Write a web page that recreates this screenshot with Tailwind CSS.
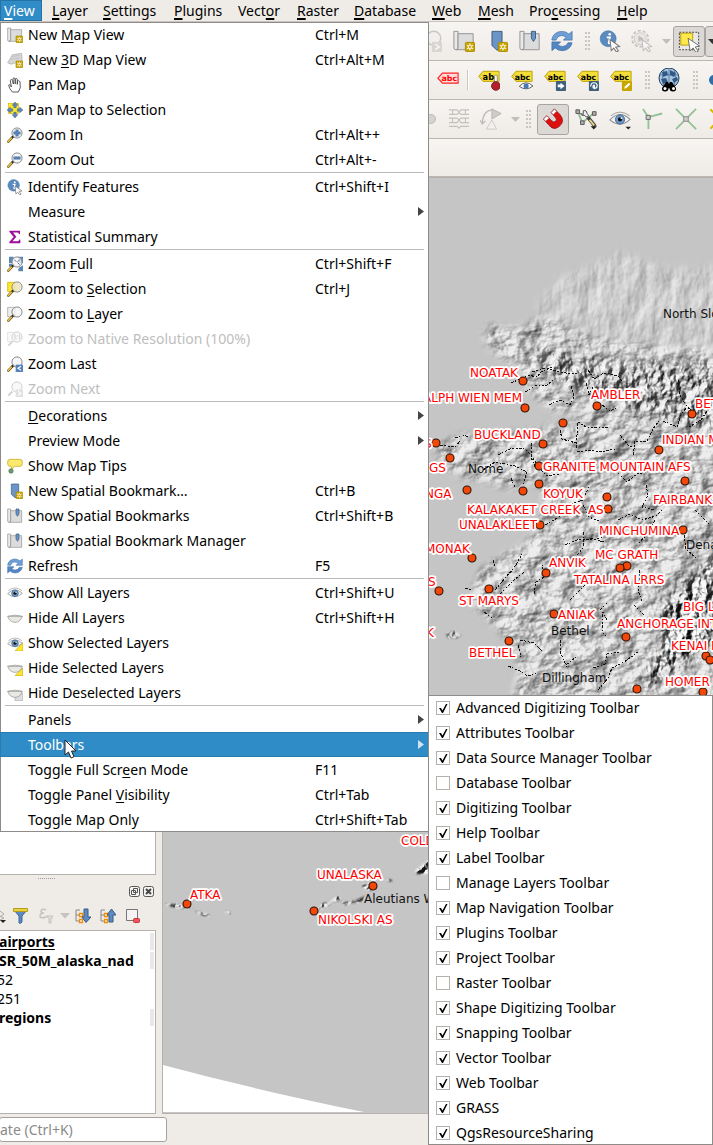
<!DOCTYPE html>
<html lang="en">
<head>
<meta charset="utf-8">
<title>QGIS View menu</title>
<script src="https://cdn.jsdelivr.net/npm/@tailwindcss/browser@4"></script>
</head>
<body class="relative flex min-h-screen flex-col overflow-hidden bg-[#efebe7] font-['Noto_Sans','Liberation_Sans',sans-serif] text-sm text-black">

<svg class="hidden" aria-hidden="true">
  <defs>
    <g id="badge"><rect x="13.5" y="13.500" width="10" height="10" rx="1" fill="#c9a500" stroke="#a98a00"/><path d="M18.500 14.800v7.400M15.300 16.600l6.400 3.800M15.300 20.400l6.400-3.800" stroke="#fff" stroke-width="1.400"/><circle cx="18.500" cy="18.500" r="1.200" fill="#c9a500"/></g>
    <g id="sheet"><path d="M1 1.500h4.500v18q0 2-2.300 2T1 19.500z" fill="#e9e9e9" stroke="#8f8f8f"/><path d="M5.500 4H22v17.500H3.200q2.300 0 2.300-2z" fill="#dcdcdc" stroke="#8f8f8f"/></g>
    <g id="lens"><path d="M8 15.500 2 22" stroke="#5b4a12" stroke-width="3.600" stroke-linecap="round"/><path d="M6.500 17 2 21.800" stroke="#f0c648" stroke-width="2.200" stroke-linecap="round"/><path d="M10.500 13 8 15.500" stroke="#222" stroke-width="3"/><circle cx="15" cy="9" r="7.600" fill="#f4f4f4" fill-opacity=".75" stroke="#8b8b8b" stroke-width="1.500"/></g>
    <path id="ptr" d="M12 10.500 22.500 18l-4.300.7 3 4-2.200 1.300-2.800-4.200-2.800 2.800z" fill="#fff" stroke="#777" stroke-width="1.100"/>
    <g id="eyeb"><path d="M1 13Q12 1.500 23 12.500 12 22.500 1 13z" fill="#f4f4f4" stroke="#8d8d8d" stroke-width="1.100"/><path d="M2 8.500Q12 .5 22.500 8.500" fill="none" stroke="#999"/><circle cx="12" cy="12.500" r="5" fill="#6f9acb" stroke="#43658c"/><circle cx="12" cy="12.500" r="2.300" fill="#111"/><circle cx="13.500" cy="11" r="1" fill="#fff"/></g>
    <path id="lid" d="M1 9.500h22Q20 18.500 12 18.500T1 9.500zM1 9.500q11-3.500 22 0" fill="#e9e9e4" stroke="#9c9c9c" stroke-width="1.200"/>
    <g id="tag"><path d="M.7 8 5.500 2.500H23v11H5.500z" fill="#f4de35" stroke="#b79d00"/><circle cx="4" cy="8" r="1" fill="#fff" stroke="#b79d00" stroke-width=".5"/></g>
  </defs>
  <symbol id="mapnew" viewBox="0 0 24 24"><use href="#sheet"/><use href="#badge"/></symbol>
  <symbol id="map3d" viewBox="0 0 24 24"><path d="M1 16 8 4l14-2 1 14q-7-4-12 1-5 3-10-1z" fill="#d6d6d6" stroke="#aaa"/><path d="M7 7l12-2M5 11l14-2" stroke="#bbb"/><use href="#badge"/></symbol>
  <symbol id="pan" viewBox="0 0 24 24"><path d="M8 22.500 4 17 2.500 12q1.600-1.500 3 .5l1 2.500L5 5.500q0-1.600 1.500-1.600T8.500 5l1 5.500L9 3q0-1.600 1.500-1.600T12.300 3v7.500V4q0-1.600 1.600-1.600T15.500 4v7V7q0-1.500 1.700-1.500T19.500 7.500L20 16l-3 6.500z" fill="#fff" stroke="#444" stroke-width="1.300"/></symbol>
  <symbol id="pansel" viewBox="0 0 24 24"><rect x="2" y="2" width="15" height="15" fill="#ffe72e" stroke="#d3b600"/><path d="M12 0l4.300 5h-2.500v3.500h-3.600V5H7.700zM12 24l4.300-5h-2.500v-3.500h-3.600V19H7.700zM0 12l5-4.300v2.500h3.500v3.600H5v2.500zM24 12l-5-4.300v2.500h-3.500v3.600H19v2.500z" fill="#5f87b5" stroke="#3f5f87" stroke-width=".7"/></symbol>
  <symbol id="zin" viewBox="0 0 24 24"><use href="#lens"/><path d="M13 4h4v3h3v4h-3v3h-4v-3h-3V7h3z" fill="#5583ba" stroke="#416897" stroke-width=".5"/></symbol>
  <symbol id="zout" viewBox="0 0 24 24"><use href="#lens"/><path d="M10 7h10v4H10z" fill="#5583ba" stroke="#416897" stroke-width=".5"/></symbol>
  <symbol id="ident" viewBox="0 0 24 24"><circle cx="10" cy="9.500" r="8.700" fill="#5b8abf" stroke="#3f6fa5" stroke-width=".6"/><path d="M9 8h3l-1.500 6q0 1 1.500.2M10 8H8.500" fill="none" stroke="#fff" stroke-width="1.900"/><circle cx="11.700" cy="4.700" r="1.400" fill="#fff"/><use href="#ptr"/></symbol>
  <symbol id="sigma" viewBox="0 0 24 24"><path d="M3.500 2.500h16v5h-1.800q0-2.200-2.200-2.200H9l5 6.200-5.700 7H16q2.200 0 2.500-2.700H20v5.700H3.500v-2L10 12 3.500 4z" fill="#9b0f9b"/></symbol>
  <symbol id="zfull" viewBox="0 0 24 24"><path d="M3 1h7v3l-2 2 2 2-2 3H3zM24 1h-7v3l2 2-2 2 2 3h5zM24 23h-7v-4l2-2 5-3zM3 12h5v4H3z" fill="#5f87b5"/><use href="#lens"/><path d="M11 5.500l3 3M19 5.500l-3 3M19 13l-3-3" stroke="#47698f" stroke-width="1.500"/></symbol>
  <symbol id="zsel" viewBox="0 0 24 24"><path d="M1 2h11v14H1z" fill="#ffe72e" stroke="#c5a900"/><use href="#lens"/><circle cx="15" cy="9" r="6" fill="#e9e0a0" fill-opacity=".6"/></symbol>
  <symbol id="zlay" viewBox="0 0 24 24"><path d="M1 2h11v14H1z" fill="#eee" stroke="#999"/><use href="#lens"/></symbol>
  <symbol id="znat" viewBox="0 0 24 24"><g opacity=".3"><path d="M1 2h11v14H1z" fill="#eee" stroke="#777"/><path d="M8 15.500 2 22" stroke="#777" stroke-width="3"/><circle cx="15" cy="9" r="7.600" fill="#eee" stroke="#666" stroke-width="1.500"/><path d="M10.500 6.500 12 5.500V13M17.500 6.500 19 5.500V13M15 7v1.500M15 11v1.500" fill="none" stroke="#555" stroke-width="1.400"/></g></symbol>
  <symbol id="zlast" viewBox="0 0 24 24"><use href="#lens"/><path d="M13 13h11v11H13z" fill="#5583ba"/><path d="M21 15.500l-4.500 3 4.500 3" fill="none" stroke="#fff" stroke-width="1.700"/></symbol>
  <symbol id="znext" viewBox="0 0 24 24"><g opacity=".35"><path d="M8 15.500 2 22" stroke="#777" stroke-width="3"/><circle cx="15" cy="9" r="7.600" fill="#eee" stroke="#777" stroke-width="1.500"/><path d="M13 13h11v11H13z" fill="#aaa"/><path d="M16.500 15.500l4.500 3-4.500 3" fill="none" stroke="#fff" stroke-width="1.700"/></g></symbol>
  <symbol id="tips" viewBox="0 0 24 24"><path d="M4.500 2h15Q23 2 23 6v2.500q0 4-3.500 4H11L7 18l-.5-5.500h-2Q1 12.500 1 8.500V6q0-4 3.500-4z" fill="#fbe96f" stroke="#c9ae2b" stroke-width="1.200"/><circle cx="6" cy="19.500" r="3.300" fill="#6f9b73" stroke="#46704b"/></symbol>
  <symbol id="bmnew" viewBox="0 0 24 24"><path d="M6.500 1.500h11V21L12 22l-5.500-5z" fill="#6b95c6" stroke="#36597f"/><use href="#badge"/></symbol>
  <symbol id="bm" viewBox="0 0 24 24"><use href="#sheet"/><path d="M13.500 1.500h4.500V9l-2.250 3.500L13.500 9z" fill="#6b95c6" stroke="#36597f"/></symbol>
  <symbol id="refresh" viewBox="0 0 24 24"><path d="M1 10Q3 2 11.500 1.500q5 0 8 3L23 1.500V11h-9.500l3-3Q14.500 6 11 6 6.500 6.500 5.500 11H1z" fill="#6e9fd6" stroke="#3d6ea8" stroke-width=".8"/><path d="M23 14q-2 8-10.500 8.500-5 0-8-3L1 22.500V13h9.500l-3 3q2 2 5.500 2 4.500-.5 5.500-4z" fill="#5587c4" stroke="#3d6ea8" stroke-width=".8"/></symbol>
  <symbol id="eye" viewBox="0 0 24 24"><use href="#eyeb"/></symbol>
  <symbol id="eyemenu" viewBox="0 0 24 24"><use href="#eyeb"/><path d="M18 20.500h6l-3 3z" fill="#222"/></symbol>
  <symbol id="hide" viewBox="0 0 24 24"><use href="#lid"/></symbol>
  <symbol id="eyesel" viewBox="0 0 24 24"><path d="M12 24h12V11z" fill="#ffe72e" stroke="#c5a900"/><use href="#eyeb"/></symbol>
  <symbol id="hidesel" viewBox="0 0 24 24"><path d="M12 23.500 23.500 12v11.500z" fill="#ffe72e" stroke="#c5a900"/><use href="#lid"/></symbol>
  <symbol id="hidedes" viewBox="0 0 24 24"><path d="M12 13h12v10.500H12z" fill="#ddd" stroke="#aaa"/><use href="#lid"/></symbol>
  <symbol id="gear" viewBox="0 0 24 24"><g opacity=".4"><circle cx="10" cy="9.500" r="8.800" fill="none" stroke="#888" stroke-width="2" stroke-dasharray="3.500 2"/><circle cx="10" cy="9.500" r="6.500" fill="#ddd" stroke="#888"/><path d="M8 6l6 3.500L8 13z" fill="#777"/><use href="#ptr"/></g></symbol>
  <symbol id="select" viewBox="0 0 24 24"><path d="M1.500 2.500h21v19h-21z" fill="#e9e9e9" stroke="#333" stroke-dasharray="2 1.500"/><path d="M3 3.500h13v13H3z" fill="#ffe84a" stroke="#b79d00"/><path d="M11 9 23.500 17.500l-4.800 1 3.300 4.500-2.500 1.500-3-5-3.200 3.300z" fill="#fff" stroke="#666"/></symbol>
  <symbol id="lock" viewBox="0 0 24 24"><use href="#tag"/><text x="5" y="11.500" font-size="9" font-weight="bold" font-family="DejaVu Sans">ab</text><path d="M18 14V7.500q1.500-2 3 0V14z" fill="#fff" stroke="#777" stroke-width=".8"/><circle cx="19.500" cy="18.500" r="4.700" fill="#b3202c" stroke="#7d131b"/></symbol>
  <symbol id="tageye" viewBox="0 0 24 24"><use href="#tag"/><text x="4" y="11.500" font-size="8.500" font-weight="bold" font-family="DejaVu Sans">abc</text><path d="M9 19q7-7.500 15-.5-7 6-15 .5z" fill="#fff" stroke="#555"/><circle cx="16.500" cy="18.500" r="2.800" fill="#4977b0"/></symbol>
  <symbol id="tagmove" viewBox="0 0 24 24"><use href="#tag"/><text x="4" y="11.500" font-size="8.500" font-weight="bold" font-family="DejaVu Sans">abc</text><rect x="13" y="13" width="11" height="11" rx="1" fill="#3d607c"/><path d="M15 17h3v-2l4.500 3.500L18 22v-2h-3z" fill="#fff"/></symbol>
  <symbol id="tagrot" viewBox="0 0 24 24"><use href="#tag"/><text x="4" y="11.500" font-size="8.500" font-weight="bold" font-family="DejaVu Sans">abc</text><rect x="13" y="13" width="11" height="11" rx="1" fill="#3d607c"/><path d="M15 19q0-4 3.500-4t3.500 3-2.500 3-2-2 1.500-1v4" fill="none" stroke="#fff" stroke-width="1.300"/></symbol>
  <symbol id="tagedit" viewBox="0 0 24 24"><use href="#tag"/><text x="4" y="11.500" font-size="8.500" font-weight="bold" font-family="DejaVu Sans">abc</text><rect x="13" y="13" width="11" height="11" rx="1" fill="#c9a500"/><path d="M15.500 21.500l.7-2.500 4.500-4 1.600 1.600-4.300 4.200z" fill="#fff"/></symbol>
  <symbol id="tagred" viewBox="0 0 24 24"><path d="M1 10 6 4.500h17v11H6z" fill="#fdd" stroke="#f22" stroke-width="1.300"/><text x="5" y="13.500" font-size="8.500" font-weight="bold" font-family="DejaVu Sans" fill="#f00">abc</text></symbol>
  <symbol id="globe" viewBox="0 0 24 24"><circle cx="12" cy="10" r="10" fill="#a9c4de" stroke="#22405f"/><path d="M5 4l5-1 1 4-5 2zM13 2l6 3-2 4-4-2zM4 11l5-1 2 4-5 2zM15 11l5-2 1 3-4 3z" fill="#2f5a85"/><path d="M2 7h20M12 0v20M7 1q-3 9 0 18M17 1q3 9 0 18" fill="none" stroke="#2f5a85" stroke-width=".6"/><path d="M5 20l4-6h2l1 2 1-2h2l4 6q.5 3.500-3 3.500t-3.500-3.500h-1q0 3.500-3.500 3.500T5 20z" fill="#000"/><circle cx="8" cy="20.500" r="1.500" fill="#fff"/><circle cx="16.500" cy="20.500" r="1.500" fill="#fff"/></symbol>
  <symbol id="topo" viewBox="0 0 24 24"><path d="M1 2h9l2 3 2-3h9M1 7h9l2-2 2 2h9M1 11h9l2 2 2-2h9M1 16h9l2-3 2 3h9M1 20h9l2 2 2-2h9M5 2v5M19 2v5M5 11v5M19 11v5" fill="none" stroke="#c3c0bd" stroke-width="1.200"/></symbol>
  <symbol id="rot" viewBox="0 0 24 24"><path d="M13 2Q3 3 2.500 17M0 13l2.500 4.500L6 14" fill="none" stroke="#bdbbb8" stroke-width="1.300"/><path d="M13 1l10 5-10 6z" fill="#ccc" stroke="#b5b3b0"/><path d="M7 23l6-10 5 10z" fill="#f2f0ee" stroke="#cbc8c5"/></symbol>
  <symbol id="magnet" viewBox="0 0 24 24"><path d="M1.500 12 5.500 8.500l4.500 5q3 3 5 1t-1-5L10 5l3.500-4 6 6q6 7.500-.5 13t-12-2z" fill="#dd0f0f" stroke="#8c0000" stroke-width=".8"/><path d="M1.500 12 5.500 8.500l2.300 2.600L4 14.500zM10 5l3.500-4 2.500 2.500-3.700 3.800z" fill="#fff" stroke="#a55" stroke-width=".8"/></symbol>
  <symbol id="snapcfg" viewBox="0 0 24 24"><path d="M3 4l5 12L20 6" fill="none" stroke="#8fbf91" stroke-width="2"/><path d="M1 2h4v4H1zM6 14h4v4H6zM19 4h4v4h-4z" fill="#aaa" stroke="#555"/><path d="M9 3q4-1 4 3l2 2-2 2-3-2q-3 1-4-2l3 1z" fill="#eee" stroke="#444"/><path d="M14 10l8 10" stroke="#444" stroke-width="4"/><path d="M16 13l5 6" stroke="#e7d48b" stroke-width="2"/><path d="M17 20h7l-3.500 3.500z" fill="#222"/></symbol>
  <symbol id="vert" viewBox="0 0 24 24"><path d="M1 1l6 9v13M7 10l15-4" fill="none" stroke="#93c295" stroke-width="2"/><path d="M4.500 8h4.500v4.500H4.500z" fill="#ccc" stroke="#666"/></symbol>
  <symbol id="cross" viewBox="0 0 24 24"><path d="M1 1l22 22M23 1 1 23" stroke="#93c295" stroke-width="2"/><path d="M9.500 9.500h5v5h-5z" fill="#ccc" stroke="#888"/></symbol>
  <symbol id="ptrbig" viewBox="0 0 13 20"><path d="M1 1v15l3.500-3 2.500 6 3-1.300-2.500-5.700H12z" fill="#fff" stroke="#222"/></symbol>
</svg>

<nav class="flex h-[22px] shrink-0 items-stretch border-b border-[#c9c4bf] bg-[#efebe7] text-sm leading-5" aria-label="Menu bar" id="menubar"></nav>

<header class="flex flex-col">
  <div role="toolbar" aria-label="Map navigation" class="flex h-[39px] items-center overflow-hidden border-b border-[#bbb6b1] bg-gradient-to-b from-[#f7f5f2] to-[#efebe7] pl-[414px]" id="tb1"></div>
  <div role="toolbar" aria-label="Labels" class="flex h-[39px] items-center overflow-hidden border-b border-[#bbb6b1] bg-gradient-to-b from-[#f7f5f2] to-[#efebe7] pl-[432px]" id="tb2"></div>
  <div role="toolbar" aria-label="Snapping" class="flex h-[39px] items-center overflow-hidden border-b border-[#bbb6b1] bg-gradient-to-b from-[#f7f5f2] to-[#efebe7] pl-[414px]" id="tb3"></div>
  <div class="h-[38px] border-b border-[#bbb6b1] bg-gradient-to-b from-[#f7f5f2] to-[#efebe7]"></div>
</header>

<main class="flex flex-1">
  <aside class="flex w-[156px] shrink-0 flex-col overflow-hidden">
    <div class="mt-1 h-[694px] border-r border-b border-[#b5b1ad] bg-white"></div>
    <div class="flex h-1.5 items-center justify-center pr-16"><span class="w-[17px] border-t border-dotted border-[#999]"></span></div>
    <div class="flex h-5 items-center justify-end gap-[3px] pr-[2px]">
      <button aria-label="Float panel"><svg class="size-[11px]" viewBox="0 0 11 11"><rect x=".5" y=".5" width="10" height="10" rx="2" fill="#f5f3f1" stroke="#555"/><path d="M4.500 2.500h4v4h-4zM2.500 4.500h4v4h-4z" fill="#f5f3f1" stroke="#555"/></svg></button>
      <button aria-label="Close panel"><svg class="size-[11px]" viewBox="0 0 11 11"><rect x=".5" y=".5" width="10" height="10" rx="2" fill="#f5f3f1" stroke="#555"/><path d="M3 3l5 5M8 3 3 8" stroke="#444" stroke-width="2"/></svg></button>
    </div>
    <div role="toolbar" aria-label="Layers" class="flex h-[29px] items-center">
      <button class="w-[13px]" aria-label="Map themes"><svg class="h-4 w-2" viewBox="0 0 8 16"><path d="M0 3l4 3-4 3M0 8l4 2-4 2" fill="none" stroke="#aaa"/><path d="M0 12h6l-3 3z" fill="#222"/></svg></button>
      <button class="w-[26px]" aria-label="Filter legend"><svg class="h-4 w-[15px]" viewBox="0 0 15 16"><path d="M1 2h13L9 8v6q-1 2-3 1V8z" fill="#5c8bc2" stroke="#3f6896"/><path d="M.5.500h14v3H.5z" fill="#e8d23f" stroke="#b59d1b"/></svg></button>
      <button class="w-[16px]" aria-label="Filter by expression" disabled><svg class="h-4 w-[15px]" viewBox="0 0 15 16"><path d="M7 2Q3 0 2 3q0 2 3 2-4 0-4 3t6 1" fill="none" stroke="#c5c2bf" stroke-width="1.500"/><path d="M7 8h7l-2 3v4h-2v-4z" fill="#ddd" stroke="#c5c2bf"/></svg></button>
      <button class="w-[20px]" aria-label="Expression options" disabled><svg class="mx-auto h-1.5 w-2.5" viewBox="0 0 10 6"><path d="M0 0h10L5 5.500z" fill="#c5c2bf"/></svg></button>
      <button class="w-[25px]" aria-label="Expand all"><svg class="h-4 w-4" viewBox="0 0 16 16"><path d="M1 2h4M1 7h3M1 13h3M1 2v11" stroke="#888"/><path d="M4.500 5.500h3v3h-3zM4.500 11.500h3v3h-3z" fill="#fff" stroke="#f08c00" stroke-width="1.300"/><path d="M9 1h4v8h3l-5 5.500L7 9h2z" fill="#5c8bc2" stroke="#355a83"/></svg></button>
      <button class="w-[25px]" aria-label="Collapse all"><svg class="h-4 w-4" viewBox="0 0 16 16"><path d="M1 2h4M1 7h3M1 13h3M1 2v11" stroke="#888"/><path d="M4.500 5.500h3v3h-3zM4.500 11.500h3v3h-3z" fill="#fff" stroke="#f08c00" stroke-width="1.300"/><path d="M9 14V7H7l4.500-6L16 7h-3v7z" fill="#5c8bc2" stroke="#355a83"/></svg></button>
      <button aria-label="Remove layer"><svg class="h-4 w-4" viewBox="0 0 16 16"><path d="M1.500 1.500h11v11h-11z" fill="#f5f3f1" stroke="#777"/><rect x="8.500" y="10.500" width="6" height="4" rx="1" fill="#ee5560" stroke="#c33"/></svg></button>
    </div>
    <div class="flex flex-1 flex-col border border-l-0 border-[#b5b1ad] bg-white pt-px pr-px text-sm leading-[19px]" role="tree" aria-label="Layers">
      <div role="treeitem" class="flex h-[19px] items-center justify-between"><b class="-ml-px underline underline-offset-2">airports</b><span class="h-[17px] w-1 bg-[#e8e8e8]"></span></div>
      <div role="treeitem" class="flex h-[19px] items-center justify-between"><b class="-ml-px">SR_50M_alaska_nad</b><span class="h-[17px] w-1 bg-[#e8e8e8]"></span></div>
      <div role="treeitem" class="flex h-[19px] items-center"><span class="-ml-[3px]">52</span></div>
      <div role="treeitem" class="flex h-[19px] items-center"><span class="-ml-[3px]">251</span></div>
      <div role="treeitem" class="flex h-[19px] items-center justify-between"><b class="-ml-px">regions</b><span class="h-[17px] w-1 bg-[#e8e8e8]"></span></div>
    </div>
  </aside>
  <section class="ml-1.5 flex flex-1 border border-r-0 border-[#b5b1ad] bg-[#c5c5c5]" aria-label="Map canvas">
    <svg class="h-[934px] w-full" id="map">
      <defs>
        <filter id="soft" x="-5%" y="-5%" width="110%" height="110%" color-interpolation-filters="sRGB">
          <feTurbulence type="fractalNoise" baseFrequency=".06 .03" numOctaves="4" seed="4"/>
          <feDiffuseLighting surfaceScale="2" diffuseConstant="1.160" lighting-color="#fff" result="l"><feDistantLight azimuth="225" elevation="45"/></feDiffuseLighting>
          <feGaussianBlur in="SourceAlpha" stdDeviation="5"/><feComposite in="l" operator="in"/>
        </filter>
        <filter id="mid" x="-5%" y="-5%" width="110%" height="110%" color-interpolation-filters="sRGB">
          <feTurbulence type="fractalNoise" baseFrequency=".045 .06" numOctaves="5" seed="8"/>
          <feDiffuseLighting surfaceScale="5" diffuseConstant="1.140" lighting-color="#fff" result="l"><feDistantLight azimuth="215" elevation="45"/></feDiffuseLighting>
          <feGaussianBlur in="SourceAlpha" stdDeviation="4"/><feComposite in="l" operator="in"/>
        </filter>
        <filter id="hard" x="-10%" y="-10%" width="120%" height="120%" color-interpolation-filters="sRGB">
          <feTurbulence type="fractalNoise" baseFrequency=".09 .07" numOctaves="5" seed="3"/>
          <feDiffuseLighting surfaceScale="9" diffuseConstant="1.080" lighting-color="#fff" result="l"><feDistantLight azimuth="215" elevation="45"/></feDiffuseLighting>
          <feGaussianBlur in="SourceAlpha" stdDeviation="7"/><feComposite in="l" operator="in"/>
        </filter>
        <filter id="isle" x="-10%" y="-10%" width="120%" height="120%" color-interpolation-filters="sRGB">
          <feTurbulence type="fractalNoise" baseFrequency=".15" numOctaves="4" seed="6"/>
          <feDiffuseLighting surfaceScale="9" diffuseConstant="1.080" lighting-color="#fff" result="l"><feDistantLight azimuth="215" elevation="45"/></feDiffuseLighting>
          <feGaussianBlur in="SourceAlpha" stdDeviation="1"/><feComposite in="l" operator="in"/>
        </filter>
      </defs>
      <g transform="translate(-163 -178)">
        <path d="M163 1065Q260 1091 369 1113H163z" fill="#fff"/>
        <path opacity=".6" filter="url(#soft)" d="M536 322 540 300 560 278 595 264 620 250 640 260 680 270 720 266V375H520z"/>
        <path opacity=".7" filter="url(#mid)" d="M485 326 520 328 545 316 600 340 720 350V700H512L520 665 508 640 470 600 480 570 530 540 545 510 540 480 510 488 462 476 442 466 436 446 460 436 520 434 560 424 590 414 550 410 530 392 520 370 500 356 486 344z"/>
        <path opacity=".75" filter="url(#hard)" d="M530 345 600 362 720 362V430L680 426 630 408 580 390 545 375z"/>
        <path opacity=".95" filter="url(#hard)" d="M720 552V640L690 660 650 690 640 684 664 640 656 610 684 580z"/>
        <path filter="url(#isle)" opacity=".9" d="M164 904l20 1 10 3-18 0zM194 911l12 3 6 3-10-2zM318 908l6-5 7 0-9 6zM330 901l8-5 3 4-10 2zM342 903l12-2 12-5-4 5-18 4zM362 885l12-3 2 8-10 0zM415 870l14-10v14l-12 0zM386 880l5-1 1 3zM268 911l4 0zM289 908l5 1zM224 912l6-1v3z"/>
        <path d="M446 634l8-3 7 4-6 4-7-1z" filter="url(#isle)" opacity=".6"/>
        <g fill="none" stroke="#111" stroke-width="1" stroke-dasharray="3 1.500 1.500 2 2 1" shape-rendering="crispEdges">
          <path d="M511 383l9-4 8-4 9 2 4-5 11-5M532 372l12-4 12 3 10 2 11 0M525 392l10-6 12-1 6-5M588 370l6 9 10-6 14 3 4 5M549 405l11-5 10 5 4-8-3-12M586 383l3 12 4-8M602 405l8 6 8-4M678 380l2 15 6 10 7 8M713 402l-12 18-12 7M576 448l2-26 8 5 12 1 12-1M577 452l14-2 10 2 14-3M440 445l15 2 5-6M455 438l8-3 6 2M498 455l12-6 14-1 8 8 7 12 8 8 12-2 6-7M532 443l-1 14 4 10M633 455l2-14 12 0 6-12 6-8M663 421l14 6 4-12 6-8M560 430l2 9 14 4M483 470l12-8 20 4 12 6-4 14M511 478l4 10M545 525l14-8 10-12 14-5 6-14M565 545l14-6 12 1 12-3M583 505l6 12 10 4M615 470l12 12 10-8 10-2M646 485l2 10-6 12 14 3M618 520l12-6 12 6 14-4 8-8M493 560l2 8M495 590l10-12 9-10 8-14M500 594l14-14 10-8M534 594l2-12 8-5-2-12M583 532l0 16-8 10 3 8M590 538l14 4M684 535l2 14 10 9M640 570l-2 20 4 12M607 620l-4-8-1 20 4 4M520 640l14 3 8 8M508 666l10 4 10 6 8-3M518 645l3 12M560 640l1 14 6 14M598 690l10-12 4-10 12-6 14-10M593 668l12-4 2-10 12-2M465 588l6 2M484 612l8 6M634 605l10 10M695 510l14 14M620 435l8 10 8 4M655 520l-8 14-9 10M566 665l10-8M570 600l14-14 12-12M600 610l8-8"/>
        </g>
        <g id="pins" fill="#f24708" stroke="#2b1208" stroke-width="1.100"></g>
        <g id="places" class="font-['DejaVu_Sans',sans-serif] text-[12px]" fill="#111"></g>
        <g id="labels" class="font-['DejaVu_Sans',sans-serif] text-[12px]" fill="#f00" stroke="#fff" stroke-width="3.500" stroke-linejoin="round" paint-order="stroke"></g>
      </g>
    </svg>
  </section>
</main>

<footer class="flex h-[31px] shrink-0 items-center pb-px">
  <input type="text" aria-label="Locator" placeholder="ate (Ctrl+K)" class="-ml-px h-[25px] w-[168px] rounded-[3px] border border-[#a5a19d] bg-white text-sm placeholder:text-[#8a8a8a]">
</footer>

<div role="menu" aria-label="View" id="menu" class="absolute top-[22px] left-0 flex w-[429px] flex-col bg-white shadow-[inset_0_0_0_1px_#8e8b88]"></div>
<div role="group" aria-label="Toolbars" id="submenu" class="absolute top-[695px] left-[428px] flex w-[285px] flex-col bg-white shadow-[inset_0_0_0_1px_#8e8b88]"></div>
<svg class="absolute top-[739px] left-[64px] h-5 w-[13px]" aria-hidden="true"><use href="#ptrbig"/></svg>

<script>
const $ = id => document.getElementById(id);
const mn = (s, cls) => s.replace(/_(.)/, `<span class="${cls}">$1</span>`);

$('menubar').innerHTML = [['_View', 'w-[42px] pl-1'], ['_Layer', 'w-[51px] pl-[10px]'], ['_Settings', 'w-[71px] pl-[10px]'], ['_Plugins', 'w-[64px] pl-[10px]'], ['Vect_or', 'w-[59px] pl-[10px]'], ['_Raster', 'w-[57px] pl-[10px]'], ['_Database', 'w-[78px] pl-[10px]'], ['_Web', 'w-[46px] pl-[10px]'], ['_Mesh', 'w-[51px] pl-[10px]'], ['Pro_cessing', 'w-[88px] pl-[10px]'], ['_Help', 'w-[51px] pl-[10px]']]
  .map(([t, c], i) => `<button class="text-left whitespace-nowrap ${c} ${i ? '' : 'bg-[#308cc6] text-white shadow-[inset_0_0_0_1px_#2573a5]'}">${mn(t, 'underline decoration-2 underline-offset-2')}</button>`).join('');

const items = [
 ['New _Map View','Ctrl+M','mapnew'],['New _3D Map View','Ctrl+Alt+M','map3d'],['Pan Map','','pan'],['Pan Map to Selection','','pansel'],['Zoom In','Ctrl+Alt++','zin'],['Zoom Out','Ctrl+Alt+-','zout'],0,
 ['Identify Features','Ctrl+Shift+I','ident'],['Measure','>',''],['Statistical Summary','','sigma'],0,
 ['Zoom _Full','Ctrl+Shift+F','zfull'],['Zoom to _Selection','Ctrl+J','zsel'],['Zoom to _Layer','','zlay'],['Zoom to Native Resolution (100%)','','znat',1],['Zoom Last','','zlast'],['Zoom Next','','znext',1],0,
 ['_Decorations','>',''],['Preview Mode','>',''],['Show Map Tips','','tips'],['New Spatial Bookmark…','Ctrl+B','bmnew'],['Show Spatial Bookmarks','Ctrl+Shift+B','bm'],['Show Spatial Bookmark Manager','','bm'],['Refresh','F5','refresh'],0,
 ['Show All Layers','Ctrl+Shift+U','eye'],['Hide All Layers','Ctrl+Shift+H','hide'],['Show Selected Layers','','eyesel'],['Hide Selected Layers','','hidesel'],['Hide Deselected Layers','','hidedes'],0,
 ['Panels','>',''],['Toolbars','>','',2],['Toggle Full Scr_een Mode','F11',''],['Toggle Panel _Visibility','Ctrl+Tab',''],['Toggle Map Only','Ctrl+Shift+Tab','']];
$('menu').innerHTML = items.map(it => {
  if (!it) return '<div role="separator" class="mx-[5px] h-0.5 border-t border-[#bdbab7]"></div>';
  const [t, k, ic, st] = it;
  const tone = st === 1 ? 'text-[#bebebe]' : st === 2 ? 'bg-[#308cc6] text-white shadow-[inset_0_0_0_1px_#2a7cb0]' : '';
  const right = k === '>' ? `<svg class="mr-[5px] ml-auto h-[9px] w-[6px]" viewBox="0 0 6 9"><path d="M0 0l6 4.500L0 9z" fill="${st === 2 ? '#cfe3f2' : '#444'}"/></svg>` : `<span class="w-[114px] text-left">${k}</span>`;
  return `<button role="menuitem" ${st === 1 ? 'disabled' : ''} class="flex h-[25px] items-center pl-[7px] text-left whitespace-nowrap ${tone}"><svg class="mr-[5px] size-4 shrink-0">${ic ? `<use href="#${ic}"/>` : ''}</svg><span class="flex-1">${mn(t, 'underline decoration-1 underline-offset-2')}</span>${right}</button>`;
}).join('');

$('submenu').innerHTML = ['Advanced Digitizing Toolbar','Attributes Toolbar','Data Source Manager Toolbar','-Database Toolbar','Digitizing Toolbar','Help Toolbar','Label Toolbar','-Manage Layers Toolbar','Map Navigation Toolbar','Plugins Toolbar','Project Toolbar','-Raster Toolbar','Shape Digitizing Toolbar','Snapping Toolbar','Vector Toolbar','Web Toolbar','GRASS','QgsResourceSharing']
  .map((t, i) => { const off = t[0] === '-'; return `<label for="t${i}" class="flex h-[25px] items-center gap-1.5 pl-2 whitespace-nowrap"><span class="grid"><input type="checkbox" id="t${i}" ${off ? '' : 'checked'} class="peer size-3.5 appearance-none border border-[#b5b1ad] bg-white [grid-area:1/1]"><svg class="invisible size-3.5 peer-checked:visible [grid-area:1/1]" viewBox="0 0 14 14"><path d="M3 7h2l1.500 2.500L10 3h1.500L7 12H6z" fill="#000"/></svg></span><span>${off ? t.slice(1) : t}</span></label>`; }).join('');

const ic = (id, w, name, x = '') => `<button aria-label="${name}" class="flex shrink-0 items-center justify-center ${w} ${x}"><svg class="size-[22px]"><use href="#${id}"/></svg></button>`;
const grip = w => `<span class="flex shrink-0 justify-center gap-px ${w}"><span class="h-[18px] border-l-2 border-dotted border-[#c9c5c1]"></span><span class="h-[18px] border-l-2 border-dotted border-[#c9c5c1]"></span></span>`;
const down = (w, c = '#c0bdba') => `<button aria-label="More" class="flex shrink-0 justify-center ${w}"><svg class="h-[5px] w-[9px]" viewBox="0 0 9 5"><path d="M0 0h9L4.500 5z" fill="${c}"/></svg></button>`;
const pressed = 'h-[31px] rounded-[3px] border border-[#a8a4a0] bg-[#dbd8d5]';
$('tb1').innerHTML = ic('znext','w-[33px]','Zoom next') + ic('mapnew','w-[33px]','New map view') + ic('bmnew','w-[33px]','New bookmark') + ic('bm','w-[33px]','Bookmarks') + ic('refresh','w-[31px]','Refresh') + grip('w-5') + ic('ident','w-[26px]','Identify') + ic('gear','w-[38px]','Run action') + down('w-2.5') + ic('select','ml-0.5 w-8','Select features', pressed) + `<button aria-label="Selection options" class="flex w-4 shrink-0 items-center border pl-0.5 ${pressed}"><svg class="h-[5px] w-[9px]" viewBox="0 0 9 5"><path d="M0 0h9L4.500 5z" fill="#333"/></svg></button>`;
$('tb2').innerHTML = ic('tagred','w-8','Unplaced labels') + '<span class="mx-[3px] h-5 w-0.5 shrink-0 border-l border-[#c9c5c1] bg-white"></span>' + ic('lock','w-[33px]','Pin labels') + ic('tageye','w-[33px]','Show labels') + ic('tagmove','w-[33px]','Move label') + ic('tagrot','w-[33px]','Rotate label') + ic('tagedit','w-[33px]','Edit label') + grip('w-5') + `<button aria-label="MetaSearch" class="shrink-0"><svg class="size-6"><use href="#globe"/></svg></button>` + grip('w-[28px]') + '<button aria-label="GRASS" class="h-2.5 w-5 shrink-0 rounded-full bg-[#2f6ea8]"></button>';
$('tb3').innerHTML = '<button aria-label="Offset" class="mr-[10px] ml-[12px] size-2.5 shrink-0 rounded-full border border-[#bbb] bg-[#d5d3d1]"></button>' + ic('topo','w-[26px]','Topology') + ic('rot','w-[38px]','Rotate point symbols') + down('w-2.5') + grip('w-[17px]') + ic('magnet','w-8','Snapping', pressed) + ic('snapcfg','w-[34px]','Snapping options') + ic('eyemenu','w-[33px]','Snapping layers') + ic('vert','w-[33px]','Vertex snapping') + ic('cross','w-[33px]','Intersection snapping') + '<svg class="ml-2 h-5 w-4 shrink-0" viewBox="0 0 16 20"><path d="M0 0l7 7v6l-7 7M16 0 7 7" fill="none" stroke="#dcb900" stroke-width="2"/></svg>';

$('pins').innerHTML = [[523,381],[525,408],[597,406],[692,414],[563,423],[436,443],[543,444],[659,450],[450,458],[539,466],[539,484],[685,481],[467,490],[523,491],[607,497],[608,509],[540,525],[683,530],[472,558],[546,573],[627,566],[620,568],[489,589],[439,591],[554,614],[626,637],[509,641],[706,656],[710,660],[637,689],[703,692],[187,904],[373,886],[314,911]].map(([x, y]) => `<circle cx="${x}" cy="${y}" r="4"/>`).join('');
const tx = a => a.map(([x, y, t]) => `<text x="${x}" y="${y}">${t}</text>`).join('');
$('labels').innerHTML = tx([[470,377,'NOATAK'],[423,402,'ALPH WIEN MEM'],[591,399,'AMBLER'],[695,408,'BETTLES'],[474,439,'BUCKLAND'],[424,448,'S'],[662,444,'INDIAN MTN'],[429,472,'GS'],[543,471,'GRANITE MOUNTAIN AFS'],[425,498,'NGA'],[543,498,'KOYUK'],[653,504,'FAIRBANKS'],[467,514,'KALAKAKET CREEK&#160; AS'],[459,529,'UNALAKLEET'],[599,535,'MINCHUMINA'],[425,553,'MONAK'],[595,559,'MC GRATH'],[549,567,'ANVIK'],[574,584,'TATALINA LRRS'],[428,586,'S'],[459,605,'ST MARYS'],[683,611,'BIG LAKE'],[558,619,'ANIAK'],[617,628,'ANCHORAGE INTL'],[426,637,'K'],[671,650,'KENAI MUNI'],[469,657,'BETHEL'],[665,686,'HOMER'],[401,845,'COLD BAY'],[317,879,'UNALASKA'],[318,924,'NIKOLSKI AS'],[190,899,'ATKA']]);
$('places').innerHTML = tx([[663,318,'North Slope'],[468,473,'Nome'],[686,549,'Denali'],[551,635,'Bethel'],[542,682,'Dillingham'],[364,903,'Aleutians West']]);
</script>
</body>
</html>
